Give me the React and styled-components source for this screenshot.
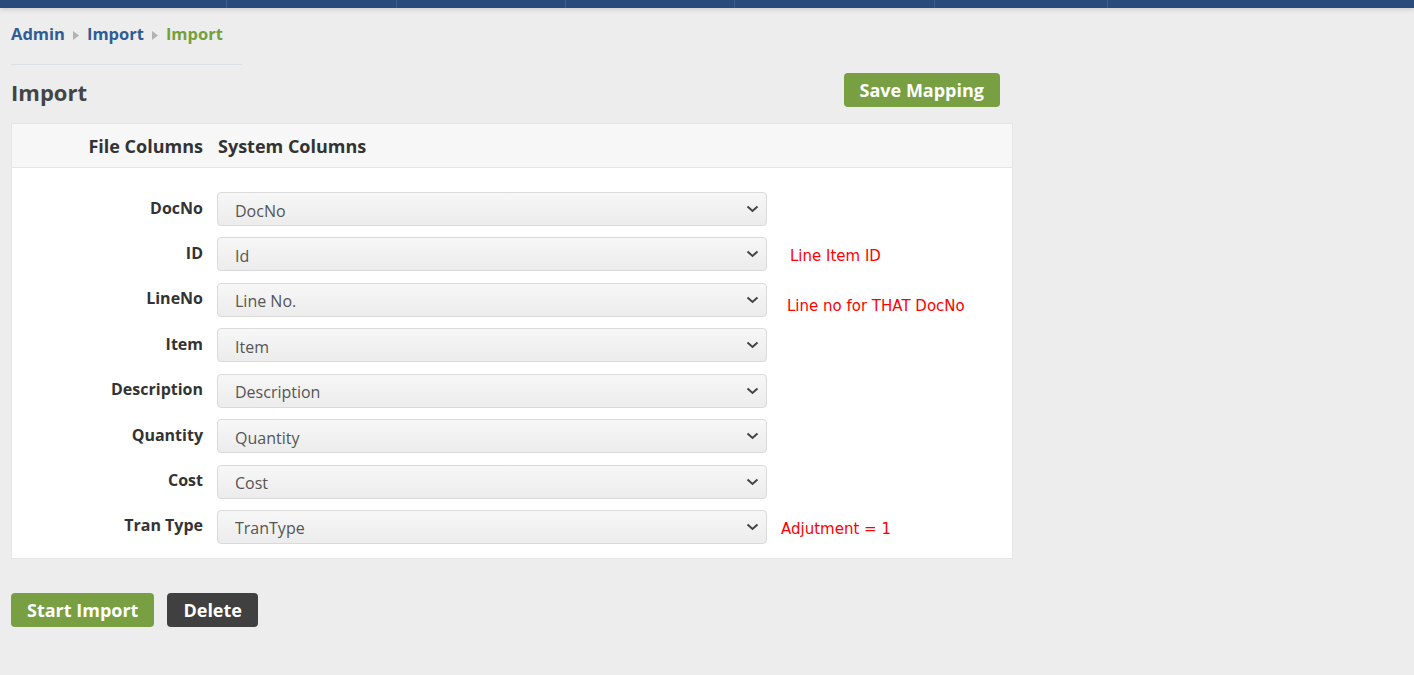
import React from 'react';
import styled, { createGlobalStyle } from 'styled-components';

const mappings = [
  { id: 1, file: 'DocNo', system: 'DocNo' },
  { id: 2, file: 'ID', system: 'Id', note: 'Line Item ID', offset: 23, shift: 2 },
  { id: 3, file: 'LineNo', system: 'Line No.', note: 'Line no for THAT DocNo', offset: 20, shift: 6 },
  { id: 4, file: 'Item', system: 'Item' },
  { id: 5, file: 'Description', system: 'Description' },
  { id: 6, file: 'Quantity', system: 'Quantity' },
  { id: 7, file: 'Cost', system: 'Cost' },
  { id: 8, file: 'Tran Type', system: 'TranType', note: 'Adjutment = 1', offset: 14, shift: 2 },
];

const navStops = [226, 396, 565, 734, 934, 1107];

const GlobalStyle = createGlobalStyle`
  html, body {
    margin: 0;
    padding: 0;
    background: #ededed;
    font-family: "Open Sans", "Noto Sans", Arial, sans-serif;
  }
`;

const Chevron = () => (
  <svg width="13" height="8" viewBox="0 0 13 8">
    <path d="M1.5 1.5 L6.5 6 L11.5 1.5" fill="none" stroke="#444" strokeWidth="2" />
  </svg>
);

const Crumb = () => (
  <svg width="6" height="9" viewBox="0 0 6 9">
    <path d="M0 0 L6 4.5 L0 9 Z" fill="#b3b3b3" />
  </svg>
);

const App = () => {
  return (
    <>
      <GlobalStyle />
      <TopBar>
        {navStops.map((x) => (
          <NavDivider key={x} style={{ left: x }} />
        ))}
      </TopBar>
      <Page>
        <Breadcrumb>
          <CrumbLink>Admin</CrumbLink>
          <Crumb />
          <CrumbLink>Import</CrumbLink>
          <Crumb />
          <CrumbLink current>Import</CrumbLink>
        </Breadcrumb>
        <Rule />
        <TitleRow>
          <Title>Import</Title>
          <Button tone="green">Save Mapping</Button>
        </TitleRow>
        <Panel>
          <PanelHeader>
            <HeadLabel align="right">File Columns</HeadLabel>
            <HeadLabel>System Columns</HeadLabel>
          </PanelHeader>
          <PanelBody>
            {mappings.map((m) => (
              <Row key={m.id}>
                <Label>{m.file}</Label>
                <Select>
                  <span>{m.system}</span>
                  <Chevron />
                </Select>
                {m.note && (
                  <Note offset={m.offset} shift={m.shift}>
                    {m.note}
                  </Note>
                )}
              </Row>
            ))}
          </PanelBody>
        </Panel>
        <Actions>
          <Button tone="green">Start Import</Button>
          <Button tone="dark">Delete</Button>
        </Actions>
      </Page>
    </>
  );
};

const TopBar = styled.div`
  position: relative;
  height: 8px;
  background: #2a4a7b;
  box-shadow: 0 2px 4px rgba(0, 0, 0, 0.12);
`;

const NavDivider = styled.span`
  position: absolute;
  top: 0;
  width: 1px;
  height: 8px;
  background: #3c5d8f;
`;

const Page = styled.div`
  padding: 0 11px;
  width: 1002px;
`;

const Breadcrumb = styled.nav`
  display: flex;
  align-items: center;
  gap: 8px;
  height: 34px;
  padding-top: 8px;
  svg {
    margin-top: 4px;
  }
`;

const CrumbLink = styled.a`
  font-size: 16.5px;
  font-weight: 700;
  color: ${(p) => (p.current ? '#76a03a' : '#2f5c93')};
`;

const Rule = styled.div`
  width: 231px;
  height: 1px;
  background: #dcdfe4;
  margin-top: 14px;
`;

const TitleRow = styled.div`
  display: flex;
  justify-content: space-between;
  align-items: flex-start;
  padding-top: 8px;
  padding-right: 13px;
  height: 50px;
`;

const Title = styled.h1`
  margin: 5px 0 0;
  font-size: 22px;
  font-weight: 700;
  color: #444;
  line-height: 28px;
`;

const Button = styled.button`
  font-family: "Open Sans", "Noto Sans", Arial, sans-serif;
  font-size: 18px;
  font-weight: 700;
  color: #fff;
  height: 34px;
  padding: 0 16px;
  border: none;
  border-radius: 4px;
  background: ${(p) => (p.tone === 'dark' ? '#404040' : '#789f42')};
  cursor: pointer;
  line-height: 34px;
`;

const Panel = styled.section`
  background: #fff;
  border: 1px solid #e6e6e6;
`;

const PanelHeader = styled.div`
  display: grid;
  grid-template-columns: 191px 1fr;
  column-gap: 15px;
  align-items: center;
  height: 43px;
  background: #f7f7f7;
  border-bottom: 1px solid #e6e6e6;
`;

const HeadLabel = styled.div`
  font-size: 18px;
  font-weight: 700;
  color: #333;
  text-align: ${(p) => p.align || 'left'};
`;

const PanelBody = styled.div`
  display: flex;
  flex-direction: column;
  gap: 11.43px;
  padding: 24px 0 14px;
`;

const Row = styled.div`
  display: grid;
  grid-template-columns: 191px 550px auto;
  column-gap: 14px;
  align-items: center;
  height: 34px;
`;

const Label = styled.label`
  font-size: 16px;
  font-weight: 700;
  color: #333;
  text-align: right;
  margin-top: -3px;
`;

const Select = styled.div`
  box-sizing: border-box;
  height: 34px;
  display: flex;
  align-items: center;
  justify-content: space-between;
  padding: 0 7px 0 17px;
  border: 1px solid #dadada;
  border-radius: 4px;
  background: linear-gradient(#f7f7f7, #ececec);
  font-size: 16px;
  color: #555;
  span {
    margin-top: 3px;
  }
`;

const Note = styled.span`
  font-family: "DejaVu Sans", Tahoma, sans-serif;
  font-size: 15px;
  color: #ff0000;
  margin-left: ${(p) => p.offset - 14}px;
  margin-top: ${(p) => p.shift * 2}px;
`;

const Actions = styled.div`
  display: flex;
  gap: 13px;
  margin-top: 34px;
`;

export default App;
